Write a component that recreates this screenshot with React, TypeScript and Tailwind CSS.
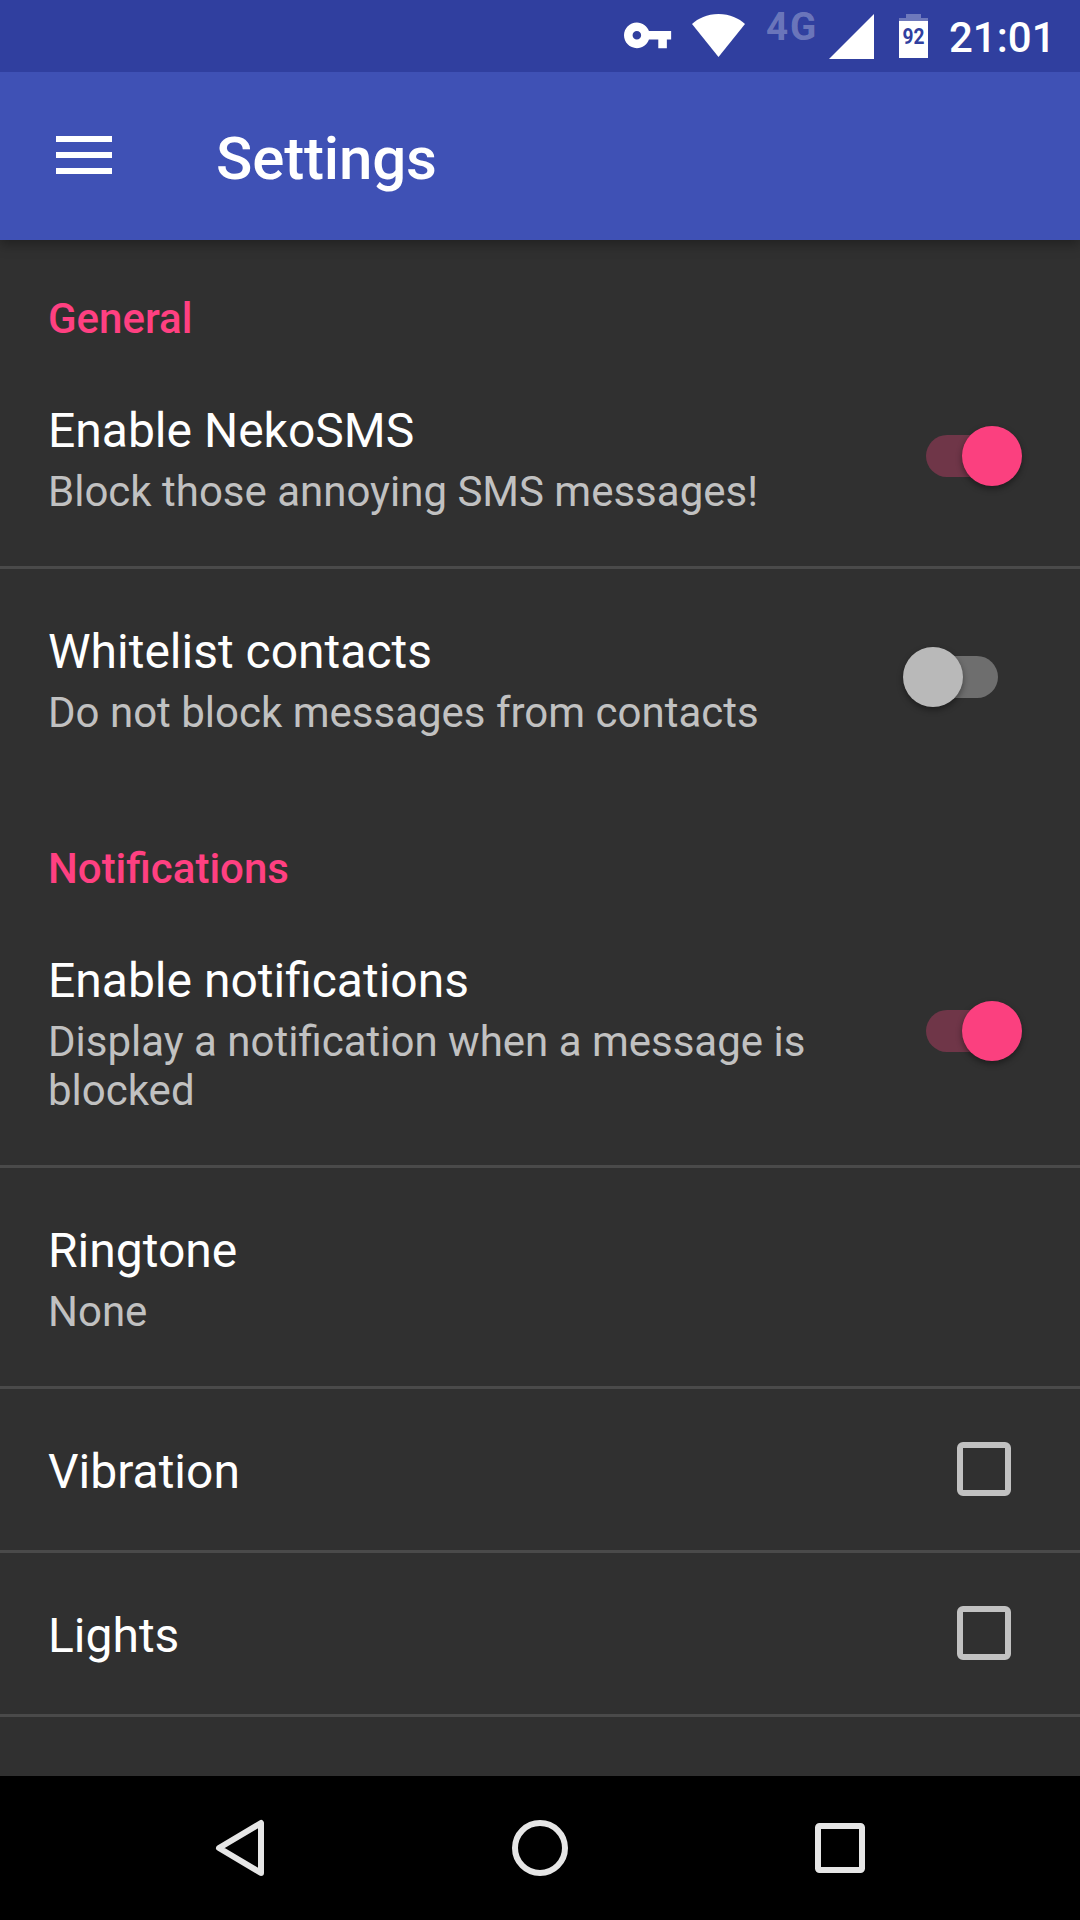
import React from 'react';

function StatusBar() {
  return (
    <div className="z-20 flex h-[72px] shrink-0 items-start bg-[#303f9f] pl-[624px] text-white">
      <svg className="mt-[22px] h-[27px] w-[48px] shrink-0" viewBox="1 5.8 22.4 12.6" fill="currentColor">
        <path d="M12.65 10C11.83 7.67 9.61 6 7 6c-3.31 0-6 2.69-6 6s2.69 6 6 6c2.61 0 4.83-1.67 5.65-4H17v4h4v-4h2v-4H12.65zM7 14c-1.1 0-2-.9-2-2s.9-2 2-2 2 .9 2 2-.9 2-2 2z" />
      </svg>
      <svg className="mt-[14px] ml-[20px] h-[43px] w-[53px] shrink-0" viewBox="0 0 53 43" fill="currentColor">
        <path d="M26.5 43 53 10C47 4.5 38 0 26.5 0S6 4.5 0 10Z" />
      </svg>
      <span className="ml-[21px] mt-[5px] w-[51px] shrink-0 text-[38.5px] leading-[44px] font-bold tracking-[2px] text-white/30">4G</span>
      <svg className="mt-[14px] ml-[12px] h-[45px] w-[45px] shrink-0" viewBox="0 0 45 45" fill="currentColor">
        <path d="M45 0V45H0Z" />
      </svg>
      <svg className="mt-[14px] ml-[25px] h-[44px] w-[29px] shrink-0" viewBox="0 0 29 44" fill="currentColor">
        <path opacity=".3" d="M7 0h15v4h7v3H0V4h7z" />
        <path d="M0 7h29v37H0z" />
        <text x="3.5" y="30.4" fill="#303f9f" fontSize="22.5" fontWeight="700" textLength="22" lengthAdjust="spacingAndGlyphs">92</text>
      </svg>
      <span className="ml-[21px] mt-[13px] text-[42px] leading-[49px] font-medium">21:01</span>
    </div>
  );
}

function AppBar() {
  return (
    <header className="z-10 flex h-[168px] shrink-0 items-start bg-[#3f51b5] pl-[56px] text-white shadow-[0_4px_12px_rgba(0,0,0,0.35)]">
      <button className="mt-[64px] flex w-[56px] flex-col gap-[10px]" aria-label="Menu">
        <span className="h-[6px] w-full bg-white" />
        <span className="h-[6px] w-full bg-white" />
        <span className="h-[6px] w-full bg-white" />
      </button>
      <h1 className="ml-[104px] mt-[52px] text-[60px] leading-[70px] font-medium tracking-[-0.15px]">Settings</h1>
    </header>
  );
}

function Switch({ on = false }: { on?: boolean }) {
  return on ? (
    <span className="mr-[58.5px] mb-[2px] flex h-[42px] w-[95.5px] items-center">
      <span className="h-[42px] w-[66px] shrink-0 rounded-l-full bg-[#6f3648]" />
      <span className="-ml-[30.5px] h-[60px] w-[60px] shrink-0 rounded-full bg-[#fb407f] shadow-[0_3px_6px_rgba(0,0,0,0.4)]" />
    </span>
  ) : (
    <span className="mr-[82px] mb-[2px] flex h-[42px] w-[95.5px] items-center">
      <span className="z-1 -mr-[30.5px] h-[60px] w-[60px] shrink-0 rounded-full bg-[#b9b9b9] shadow-[0_3px_6px_rgba(0,0,0,0.4)]" />
      <span className="h-[42px] w-[66px] shrink-0 rounded-r-full bg-[#6e6e6e]" />
    </span>
  );
}

function Checkbox() {
  return <span className="mr-[69px] mb-[1px] h-[54px] w-[54px] rounded-[6px] border-6 border-[#c1c1c1]" />;
}

type RowProps = { title: string; summary?: string; divider?: boolean; children?: React.ReactNode };

function Row({ title, summary, divider = true, children }: RowProps) {
  return (
    <>
      <div className="flex shrink-0 items-center justify-between pl-[48px]">
        <div className={summary ? 'w-[790px] pt-[55px] pb-[50px]' : 'pt-[55px] pb-[50px]'}>
          <div className="text-[48px] leading-[56px] text-white">{title}</div>
          {summary && <div className="mt-[8px] text-[42px] leading-[49px] text-[#c1c1c1]">{summary}</div>}
        </div>
        {children}
      </div>
      {divider && <div className="h-[3px] shrink-0 bg-[#4a4a4a]" />}
    </>
  );
}

export default function App() {
  return (
    <div className="flex h-[1920px] w-[1080px] flex-col overflow-hidden bg-[#303030] font-['Roboto',sans-serif]">
      <StatusBar />
      <AppBar />
      <main className="flex min-h-0 flex-1 flex-col overflow-hidden">
        <h2 className="h-[108px] shrink-0 pt-[54px] pl-[48px] text-[42px] leading-[49px] font-medium text-[#ff4081]">General</h2>
        <Row title="Enable NekoSMS" summary="Block those annoying SMS messages!">
          <Switch on />
        </Row>
        <Row title="Whitelist contacts" summary="Do not block messages from contacts" divider={false}>
          <Switch />
        </Row>
        <h2 className="h-[111px] shrink-0 pt-[57px] pl-[48px] text-[42px] leading-[49px] font-medium text-[#ff4081]">Notifications</h2>
        <Row title="Enable notifications" summary="Display a notification when a message is blocked">
          <Switch on />
        </Row>
        <Row title="Ringtone" summary="None" />
        <Row title="Vibration">
          <Checkbox />
        </Row>
        <Row title="Lights">
          <Checkbox />
        </Row>
      </main>
      <nav className="flex h-[144px] shrink-0 items-center justify-between bg-black px-[210px] text-[#e6e6e6]">
        <svg className="h-[60px] w-[60px]" viewBox="0 0 60 60" fill="none" stroke="currentColor" strokeWidth="6" strokeLinejoin="round">
          <path d="M51 5V55L9 30Z" />
        </svg>
        <svg className="h-[60px] w-[60px]" viewBox="0 0 60 60" fill="none" stroke="currentColor" strokeWidth="6">
          <circle cx="30" cy="30" r="25" />
        </svg>
        <svg className="h-[60px] w-[60px]" viewBox="0 0 60 60" fill="none" stroke="currentColor" strokeWidth="6">
          <rect x="8" y="8" width="44" height="44" rx="1.5" />
        </svg>
      </nav>
    </div>
  );
}
